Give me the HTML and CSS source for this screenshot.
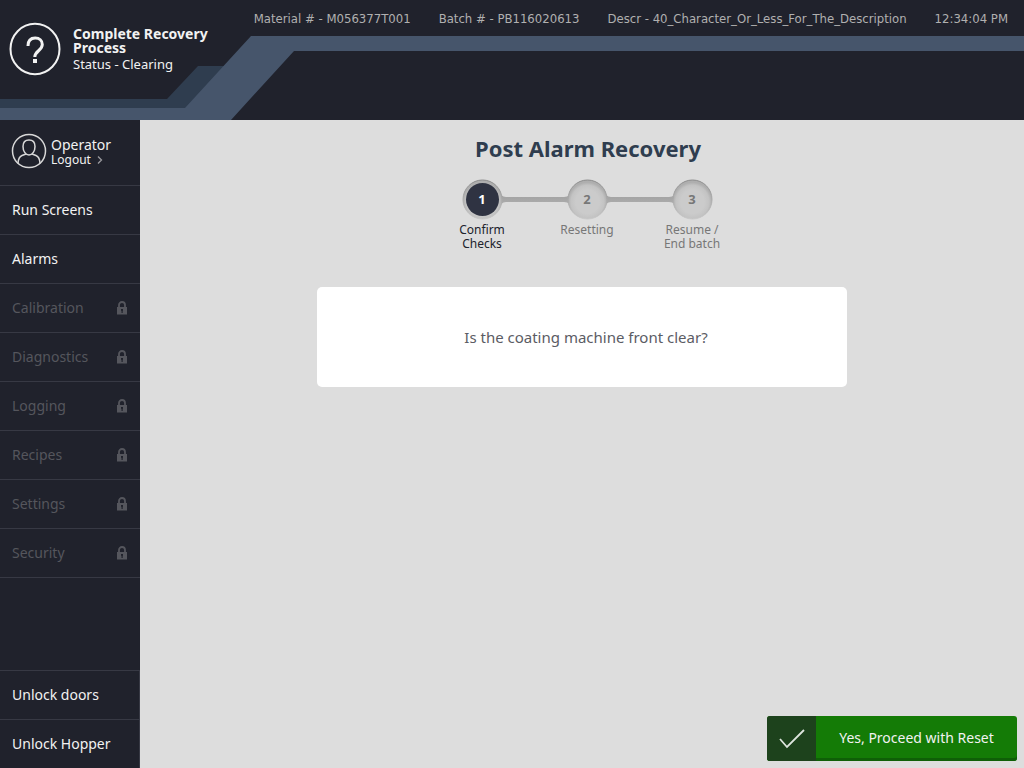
FILE: index.html
```
<!DOCTYPE html>
<html lang="en">
<head>
<meta charset="utf-8">
<title>Post Alarm Recovery</title>
<link rel="stylesheet" href="styles.css">
</head>
<body>
<svg class="symbols" aria-hidden="true">
  <symbol id="lock" viewBox="0 0 10 14">
    <path fill="none" stroke="currentColor" stroke-width="1.8" d="M2 7V4a3 3 0 0 1 6 0v3"/>
    <path fill="currentColor" fill-rule="evenodd" d="M0 6h10v7.500H0zM4 8v1.500l.5.5v2h1.200v-2l.3-.5V8z"/>
  </symbol>
</svg>
<header class="header">
  <svg class="header-art" aria-hidden="true">
    <polygon fill="#2f3d4f" points="0,99 167,99 198,66 230,66 190,110 0,110"/>
    <polygon fill="#46556b" points="0,108 185,108 251,36 6000,36 6000,51 294,51 231,120 0,120"/>
  </svg>
  <div class="process">
    <svg class="process-icon" viewBox="0 0 52 54" aria-hidden="true">
      <ellipse cx="26" cy="27" rx="24.500" ry="25.200" fill="none" stroke="#f2f2f2" stroke-width="2"/>
      <path d="M19 24c0-5 2.500-8 7.200-8 4.300 0 7.100 2.600 7.100 6.500 0 6-7.500 6.500-7.500 12.500" fill="none" stroke="#f2f2f2" stroke-width="3"/>
      <rect x="24" y="37" width="4" height="4" fill="#f2f2f2"/>
    </svg>
    <div>
      <h2 class="process-name">Complete Recovery Process</h2>
      <p class="process-status">Status - Clearing</p>
    </div>
  </div>
  <div class="batch-info">
    <span>Material # - M056377T001</span>
    <span>Batch # - PB116020613</span>
    <span>Descr - 40_Character_Or_Less_For_The_Description</span>
    <time>12:34:04 PM</time>
  </div>
</header>
<div class="body">
  <nav class="sidebar">
    <div class="user">
      <svg class="avatar" viewBox="0 0 36 36" fill="none" stroke="#d8d8d8" stroke-width="1.500" aria-hidden="true">
        <circle cx="18" cy="18" r="16.500"/>
        <path d="M18 7c-4 0-6 2.700-6 6.500 0 4.500 2.400 8.500 6 8.500s6-4 6-8.500C24 9.700 22 7 18 7z"/>
        <path d="M7 30.500c.2-5 1.500-7 4-8l4-1.500M29 30.500c-.2-5-1.500-7-4-8l-4-1.500"/>
      </svg>
      <div class="user-text">
        <span class="user-name">Operator</span>
        <button class="logout" type="button">Logout
          <svg class="chevron" viewBox="0 0 6 8" aria-hidden="true"><path d="M1 0.500l3.500 3.500L1 7.500" fill="none" stroke="#9a9a9e" stroke-width="1.300"/></svg>
        </button>
      </div>
    </div>
    <button class="nav-item" type="button">Run Screens</button>
    <button class="nav-item" type="button">Alarms</button>
    <button class="nav-item" type="button" disabled>Calibration<svg class="lock"><use href="#lock"/></svg></button>
    <button class="nav-item" type="button" disabled>Diagnostics<svg class="lock"><use href="#lock"/></svg></button>
    <button class="nav-item" type="button" disabled>Logging<svg class="lock"><use href="#lock"/></svg></button>
    <button class="nav-item" type="button" disabled>Recipes<svg class="lock"><use href="#lock"/></svg></button>
    <button class="nav-item" type="button" disabled>Settings<svg class="lock"><use href="#lock"/></svg></button>
    <button class="nav-item" type="button" disabled>Security<svg class="lock"><use href="#lock"/></svg></button>
    <div class="nav-bottom">
      <button class="nav-item" type="button">Unlock doors</button>
      <button class="nav-item" type="button">Unlock Hopper</button>
    </div>
  </nav>
  <main class="main">
    <h1 class="title">Post Alarm Recovery</h1>
    <div class="stepper">
      <svg class="track" viewBox="0 0 315 40" aria-hidden="true">
        <defs>
          <linearGradient id="edge" x1="0" y1="0" x2="0" y2="1">
            <stop offset="0" stop-color="#8a8a8a"/>
            <stop offset="0.500" stop-color="#aaa"/>
            <stop offset="1" stop-color="#c8c8c8"/>
          </linearGradient>
          <radialGradient id="well" cx="0.500" cy="0.560">
            <stop offset="0.600" stop-color="#cbcbcb"/>
            <stop offset="0.850" stop-color="#c3c3c3"/>
            <stop offset="1" stop-color="#aeaeae"/>
          </radialGradient>
          <linearGradient id="bar" x1="0" y1="0" x2="0" y2="1">
            <stop offset="0" stop-color="#999"/>
            <stop offset="1" stop-color="#b5b5b5"/>
          </linearGradient>
        </defs>
        <path fill="url(#bar)" d="M65 8Q71 17 76 17H134Q140 17 146 8V31Q140 22 134 22H76Q71 22 65 31zM170 8Q176 17 181 17H239Q245 17 251 8V31Q245 22 239 22H181Q176 22 170 31z"/>
        <g fill="url(#well)" stroke="url(#edge)">
          <circle cx="52.500" cy="19.500" r="19.500"/>
          <circle cx="157.500" cy="19.500" r="19.500"/>
          <circle cx="262.500" cy="19.500" r="19.500"/>
        </g>
      </svg>
      <ol class="steps">
        <li class="step step-active"><span class="step-number">1</span><span class="step-label">Confirm Checks</span></li>
        <li class="step"><span class="step-number">2</span><span class="step-label">Resetting</span></li>
        <li class="step"><span class="step-number">3</span><span class="step-label">Resume /<br>End batch</span></li>
      </ol>
    </div>
    <p class="question">Is the coating machine front clear?</p>
    <button class="proceed" type="button">
      <span class="proceed-icon"><svg viewBox="0 0 26 20" aria-hidden="true"><path d="M1 10l7 8L25 1" fill="none" stroke="#dde5dd" stroke-width="1.800"/></svg></span>
      <span class="proceed-label">Yes, Proceed with Reset</span>
    </button>
  </main>
</div>
</body>
</html>
```
FILE: styles.css
```
* { box-sizing: border-box; }

body {
  margin: 0;
  min-height: 100vh;
  display: flex;
  flex-direction: column;
  background: #ddd;
  color: #f2f2f2;
  font-family: Tahoma, "Noto Sans", sans-serif;
  font-size: 14px;
}

button {
  font: inherit;
  color: inherit;
  border: 0;
  padding: 0;
  background: none;
  text-align: left;
}

h1, h2, p, ol { margin: 0; padding: 0; }

.symbols { display: none; }

.header {
  position: relative;
  display: flex;
  justify-content: space-between;
  min-height: 120px;
  background: #20222c;
}

.header-art {
  position: absolute;
  inset: 0;
  width: 100%;
  height: 100%;
}

.process {
  position: relative;
  display: flex;
  align-items: flex-start;
  gap: 12px;
  width: 220px;
  padding: 22px 0 0 9px;
}

.process-icon { width: 52px; height: 54px; flex: none; }

.process-name {
  padding-top: 5px;
  font-size: 14px;
  line-height: 14px;
}

.process-status { font-size: 13px; line-height: 18px; }

.batch-info {
  position: relative;
  display: flex;
  gap: 28px;
  padding-right: 16px;
  font-family: Tahoma, "DejaVu Sans Condensed", "Noto Sans", sans-serif;
  font-size: 13px;
  line-height: 37px;
  white-space: nowrap;
  color: #b0b0b0;
}

.body { flex: 1; display: flex; }

.sidebar {
  display: flex;
  flex-direction: column;
  width: 140px;
  background: #20222c;
}

.user {
  display: flex;
  gap: 4px;
  height: 66px;
  padding: 13px 0 0 11px;
  border-bottom: 1px solid #373944;
}

.avatar { width: 36px; height: 36px; }

.user-text {
  display: flex;
  flex-direction: column;
  align-items: flex-start;
  padding-top: 4px;
}

.user-name { font-size: 14px; line-height: 16px; }

.logout {
  display: flex;
  align-items: center;
  gap: 6px;
  font-size: 12px;
  line-height: 14px;
}

.chevron { width: 6px; height: 8px; }

.nav-item {
  display: flex;
  align-items: center;
  justify-content: space-between;
  width: 100%;
  height: 49px;
  padding: 0 13px 1px 12px;
  border-bottom: 1px solid #373944;
}

.nav-item:disabled { color: #55565d; }

.lock { width: 10px; height: 14px; }

.nav-bottom {
  margin-top: auto;
  border-top: 1px solid #373944;
  border-right: 1px solid #373944;
}

.nav-bottom .nav-item:last-child { height: 48px; border-bottom: 0; }

.main {
  flex: 1;
  display: flex;
  flex-direction: column;
  align-items: center;
  padding-top: 13px;
}

.title {
  padding-left: 12px;
  font-size: 22px;
  line-height: 30px;
  color: #2f3d4f;
}

.stepper {
  position: relative;
  width: 315px;
  margin: 17px 0 0 10px;
}

.track {
  position: absolute;
  top: 0;
  left: 0;
  width: 315px;
  height: 40px;
  overflow: visible;
}

.steps {
  position: relative;
  display: flex;
  list-style: none;
}

.step {
  flex: 1;
  display: flex;
  flex-direction: column;
  align-items: center;
  color: #777;
  text-align: center;
}

.step-number {
  width: 33px;
  height: 33px;
  margin: 3px 0;
  border-radius: 50%;
  font-size: 13px;
  font-weight: bold;
  line-height: 33px;
}

.step-active { color: #20222c; }
.step-active .step-number { background: #2f3342; color: #fff; }

.step-label {
  width: 60px;
  padding-top: 4px;
  font-size: 12px;
  line-height: 14px;
}

.question {
  width: 60%;
  margin-top: 36px;
  padding: 38px 0 38px 8px;
  border-radius: 5px;
  background: #fff;
  color: #5b5c64;
  font-size: 15px;
  line-height: 24px;
  text-align: center;
}

.proceed {
  display: flex;
  align-self: flex-end;
  width: 250px;
  height: 45px;
  margin: auto 7px 7px 0;
  border-radius: 3px;
  overflow: hidden;
  background: #147b06;
  box-shadow: inset 0 -3px #0f5f07;
}

.proceed-icon {
  display: grid;
  place-items: center;
  width: 49px;
  height: 100%;
  background: #1d421c;
}

.proceed-icon svg { width: 26px; height: 20px; }

.proceed-label { flex: 1; line-height: 44px; text-align: center; }
```
